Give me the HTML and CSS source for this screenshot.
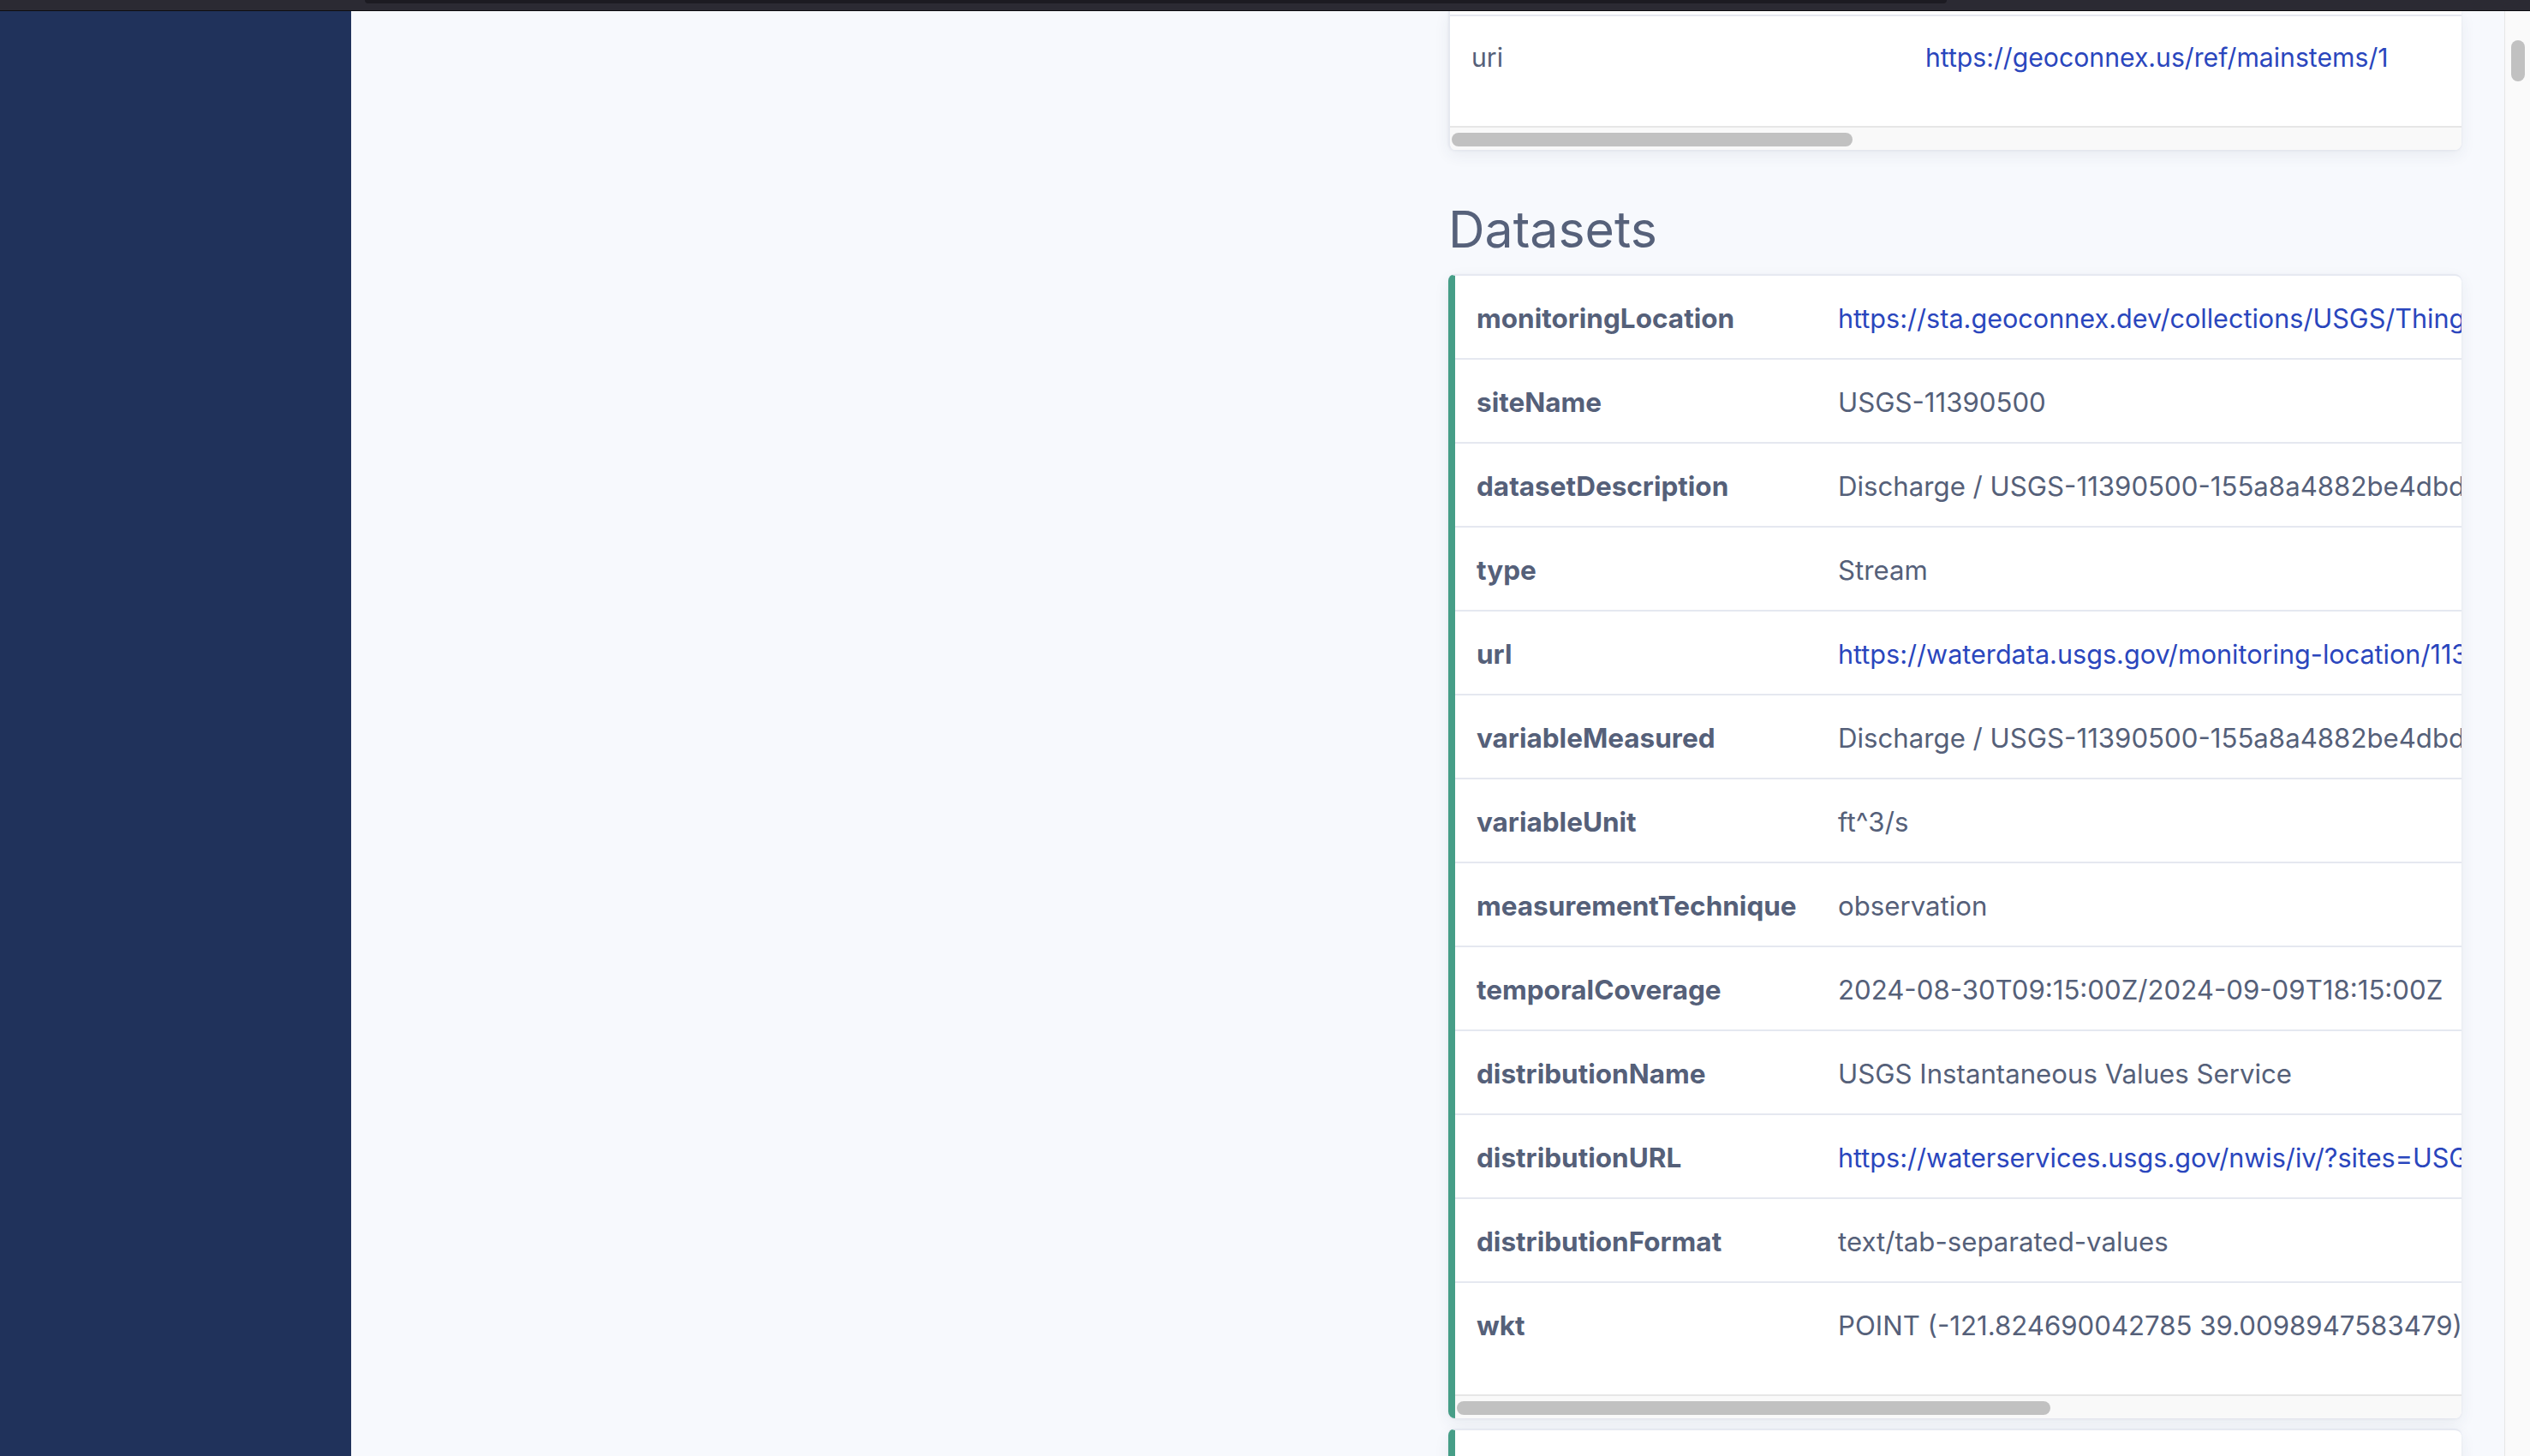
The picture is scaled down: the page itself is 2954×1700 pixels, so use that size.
FILE: index.html
```html
<!DOCTYPE html>
<html lang="en">
<head>
<meta charset="utf-8">
<title>Datasets</title>
<link rel="stylesheet" href="styles.css">
</head>
<body>
<div class="topbar"><div class="topbar-tab"></div></div>
<div class="app">
  <aside class="sidebar"></aside>
  <main class="main">
    <div class="col-left"></div>
    <div class="col">
      <section class="card card-plain">
        <div class="scroller">
          <div class="tbl tbl-top">
            <div class="row row-stub"></div>
            <div class="row row-small last">
              <div class="key key-plain">uri</div>
              <div class="val"><a class="link" href="#">https://geoconnex.us/ref/mainstems/1</a></div>
            </div>
          </div>
        </div>
        <div class="hscroll"><div class="thumb thumb-top"></div></div>
      </section>

      <h2 class="heading">Datasets</h2>

      <section class="card card-accent">
        <div class="scroller">
          <div class="tbl">
            <div class="row"><div class="key">monitoringLocation</div><div class="val"><a class="link" href="#">https://sta.geoconnex.dev/collections/USGS/Things('USGS-11390500')</a></div></div>
            <div class="row"><div class="key">siteName</div><div class="val">USGS-11390500</div></div>
            <div class="row"><div class="key">datasetDescription</div><div class="val">Discharge / USGS-11390500-155a8a4882be4dbd</div></div>
            <div class="row"><div class="key">type</div><div class="val">Stream</div></div>
            <div class="row"><div class="key">url</div><div class="val"><a class="link" href="#">https://waterdata.usgs.gov/monitoring-location/11390500</a></div></div>
            <div class="row"><div class="key">variableMeasured</div><div class="val">Discharge / USGS-11390500-155a8a4882be4dbd</div></div>
            <div class="row"><div class="key">variableUnit</div><div class="val">ft^3/s</div></div>
            <div class="row"><div class="key">measurementTechnique</div><div class="val">observation</div></div>
            <div class="row"><div class="key">temporalCoverage</div><div class="val">2024-08-30T09:15:00Z/2024-09-09T18:15:00Z</div></div>
            <div class="row"><div class="key">distributionName</div><div class="val">USGS Instantaneous Values Service</div></div>
            <div class="row"><div class="key">distributionURL</div><div class="val"><a class="link" href="#">https://waterservices.usgs.gov/nwis/iv/?sites=USGS:11390500</a></div></div>
            <div class="row"><div class="key">distributionFormat</div><div class="val">text/tab-separated-values</div></div>
            <div class="row last"><div class="key">wkt</div><div class="val">POINT (-121.824690042785 39.0098947583479)</div></div>
          </div>
        </div>
        <div class="hscroll"><div class="thumb thumb-ds"></div></div>
      </section>

      <section class="card card-accent card-next"></section>
    </div>
  </main>
  <div class="pagescroll"><div class="pagethumb"></div></div>
</div>
</body>
</html>
```
FILE: styles.css
```css
* { box-sizing: border-box; }

html, body {
  margin: 0;
  height: 1700px;
  overflow: hidden;
}

body {
  font-family: Inter, "Noto Sans", sans-serif;
  background: #f7f9fd;
  color: #556079;
}

.topbar {
  height: 13px;
  background: #2b2a33;
  border-bottom: 1px solid #0d0d10;
  display: flex;
}

.topbar-tab {
  margin-left: 426px;
  width: 1847px;
  height: 4px;
  background: #1c1b22;
  border-radius: 0 0 8px 8px;
}

.app {
  display: flex;
  height: 1687px;
}

.sidebar {
  flex: none;
  width: 410px;
  background: #20325b;
}

.main {
  flex: 1;
  display: grid;
  grid-template-columns: 1fr 1fr;
  column-gap: 48px;
  padding: 0 50px;
  overflow: hidden;
  background: #f7f9fd;
}

.col {
  display: flex;
  flex-direction: column;
  min-width: 0;
}

.card {
  background: #fff;
  border-radius: 8px;
  box-shadow: 0 6px 18px rgba(40, 50, 90, 0.07), 0 1px 3px rgba(40, 50, 90, 0.06);
  overflow: hidden;
  flex: none;
}

.card-plain {
  border-left: 2px solid #e6e9f0;
  border-radius: 0 0 8px 8px;
}

.card-accent {
  border-left: 8px solid #469e87;
  border-top: 2px solid #e6e9f1;
}

.card-next {
  margin-top: 12px;
  height: 200px;
}

.scroller {
  overflow: hidden;
}

.tbl {
  width: max-content;
  min-width: 100%;
  padding-bottom: 34px;
}

.tbl-top {
  padding-bottom: 32px;
}

.row {
  display: flex;
  align-items: center;
  height: 98px;
  padding-top: 4px;
  border-bottom: 2px solid #e5e8f0;
  font-size: 31.2px;
  line-height: 48px;
  white-space: nowrap;
}

.row.last {
  border-bottom: none;
  height: 96px;
}

.row-small {
  font-size: 30.2px;
  padding-top: 0;
}

.row-stub {
  height: 6px;
  padding-top: 0;
}

.key {
  flex: none;
  width: 447px;
  padding-left: 25px;
  font-weight: 700;
  font-size: 31.5px;
}

.key-plain {
  width: 555px;
  font-weight: 400;
  font-size: 30.2px;
}

.val {
  flex: none;
  padding-right: 25px;
}

.link {
  color: #2a46bd;
  text-decoration: none;
  font-size: 30.6px;
}

.row-small .link {
  font-size: 30.2px;
}

.hscroll {
  height: 28px;
  border-top: 2px solid #e6e6e6;
  background: #f9f9f9;
  padding: 6px 0 0 2px;
}

.thumb {
  height: 16px;
  border-radius: 8px;
  background: #c1c1c1;
}

.thumb-top { width: 468px; }
.thumb-ds { width: 693px; }

.heading {
  margin: 57px 0 16px;
  font-size: 59px;
  line-height: 72px;
  font-weight: 400;
  color: #56617a;
}

.pagescroll {
  flex: none;
  width: 30px;
  border-left: 1px solid #e6e6e6;
  background: #fafafa;
  padding: 34px 0 0 7px;
}

.pagethumb {
  width: 16px;
  height: 48px;
  border-radius: 8px;
  background: #c1c1c1;
}
```
